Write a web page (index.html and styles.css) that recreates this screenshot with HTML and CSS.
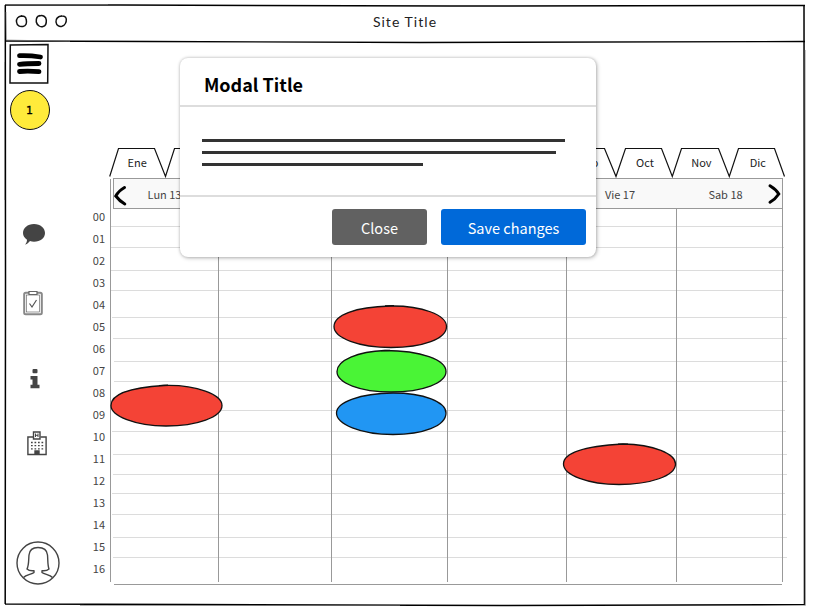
FILE: index.html
```html
<!DOCTYPE html>
<html lang="es">
<head>
<meta charset="utf-8">
<title>Site Title</title>
<link rel="stylesheet" href="styles.css">
</head>
<body>
<div class="window">
  <svg class="frame" viewBox="0 0 813 612" fill="none" stroke="#000">
    <path d="M5 5L120 5L450 6L805 5.500M804 5L804.200 200L804.500 605M5.300 5L5.500 280L5.200 604M5 604L190 604.500L500 605.500L805 604.500" stroke-width="1.500"/>
    <path d="M5 41L150 41.500L420 42.500L805 41.500" stroke-width="1.300"/>
    <path d="M5 4.500H108M4.500 62V200M805.200 50V606M80 605.500H400M6 12L6.500 40L70 41.500" stroke="#777" stroke-width=".6"/>
  </svg>
  <header class="titlebar">
    <svg class="controls" width="60" height="20" viewBox="0 0 60 20" fill="none" stroke="#111" stroke-width="1.500">
      <path d="M7 5C3 5 1 8 1.500 11C2 15 5 16 8 15.500C11 15 12 12 11.300 9C11 6 9 4.500 5.500 5"/>
      <path d="M25 4.500C22 5 21 8 21.300 11C22 14 25 16.500 28 15.500C31 15 31.500 12 31.300 9C31 5.500 28 3.800 24 5"/>
      <path d="M47 5C43 5 40.500 8 41 11C41.500 14.500 44 16 47 15.300C50 14.500 51.500 11 51.300 8C51 5 48 4.500 43.500 5.800"/>
    </svg>
    <h1 class="site-title">Site Title</h1>
  </header>
  <div class="workspace">
    <nav class="sidebar">
      <svg class="menu" width="40" height="41" viewBox="0 0 40 41">
        <path d="M1.300 2L39 1.500L38.700 40L1 40Z" fill="none" stroke="#111" stroke-width="1.500"/>
        <path d="M10.500 12.700Q20 12.200 31.500 14M10.500 21.300Q17 20.500 30 20.500M10.500 28.500Q19 27.500 30 28.700" fill="none" stroke="#000" stroke-width="4.800" stroke-linecap="round"/>
      </svg>
      <div class="badge">1</div>
      <svg class="icon chat" width="24" height="23" viewBox="0 0 24 23"><path d="M12 1C18.500 1 23 5 23 10C23 15 18.500 18.700 12 18.700C10.500 18.700 9.300 18.500 8 18C6.500 20 4.500 21.300 3 21.500C4.500 20 5 18.500 5 16.700C2.500 15 1 12.700 1 10C1 5 5.500 1 12 1Z" fill="#444"/></svg>
      <svg class="icon tasks" width="20" height="26" viewBox="0 0 20 26" fill="none" stroke="#555">
        <rect x="1.200" y="2.700" width="17.600" height="21.600" rx="1.500" stroke="#888" stroke-width="2"/>
        <rect x="3.500" y="5" width="13" height="17" stroke-width=".6"/>
        <path d="M6 4.500V1.500H14V4.500Z" fill="#fff" stroke="#666" stroke-width="1.200"/>
        <path d="M6.500 13.500L9 17L13.500 10" stroke-width="1.200"/>
      </svg>
      <svg class="icon info" width="10" height="20" viewBox="0 0 10 20" fill="#444"><rect x="2.500" y="0" width="5" height="4.300" rx="1"/><path d="M.5 7H7.500V15.800H9.500V19.300H.5V15.800H2.500V10.500H.5Z"/></svg>
      <svg class="icon hospital" width="20" height="25" viewBox="0 0 20 25" fill="none" stroke="#444" stroke-width="1.400">
        <path d="M6 6H.9V23.500H19.100V6H13.500"/>
        <path d="M6.500 1H13V8H6.500Z"/>
        <path d="M8.500 2.500V6M11 2.500V6M8.500 4.300H11" stroke-width="1"/>
        <path d="M4 11.500H17M4 14.700H17M4 17.900H17" stroke-dasharray="1.700 1.800" stroke-width="1.300"/>
        <path d="M8 23V20H12V23Z" fill="#444"/>
      </svg>
      <svg class="icon avatar" width="44" height="44" viewBox="0 0 44 44" fill="none" stroke="#444" stroke-width="1.400" stroke-linejoin="round">
        <circle cx="22" cy="22" r="21"/>
        <path d="M7.500 36.500C10 33.500 16 33.500 18 31.500V29.700C15 30 12.500 29.500 11 28C13 24 12.500 19 13 14C13.500 9 17 6.500 22 6.500C27.500 6.500 31 9 31.500 14C32 19 31.500 24 33 28C31.500 29.500 29 30 26 29.700V31.500C28.500 33.500 34 33.500 36.500 36.500"/>
      </svg>
    </nav>
    <main class="schedule">
      <svg class="tabs-outline" width="678" height="32" viewBox="0 0 678 32" fill="none" stroke="#111" stroke-width="1.200">
        <path d="M-.3 30.500L8.500 2.500H44.500L55.500 30.500L64.500 2.500H100.500L112 30.500L121 2.500H156.500L168.500 30.500L177.500 2.500H213.500L224.700 30.500L233.500 2.500H269.500L281 30.500L289.500 2.500H325.500L337.200 30.500L345.500 2.500H381.500L393.500 30.500L402.500 2.500H438.500L449.700 30.500L458.500 2.500H494.500L506 30.500L515.500 2.500H551.500L562.300 30.500L571.500 2.500H608.500L619.300 30.500L628.500 2.500H664.500L674.500 30.500"/>
      </svg>
      <div class="months"><span>Ene</span><span>Feb</span><span>Mar</span><span>Abr</span><span>May</span><span>Jun</span><span>Jul</span><span>Ago</span><span>Sep</span><span>Oct</span><span>Nov</span><span>Dic</span></div>
      <div class="days">
        <svg class="arrow" width="14" height="22" viewBox="0 0 14 22"><path d="M10.500 2.500Q4.500 6 1.800 11Q5.500 16 10.800 19" fill="none" stroke="#000" stroke-width="3" stroke-linecap="round"/></svg>
        <span>Lun 13</span><span>Mar 14</span><span>Mie 15</span><span>Jue 16</span><span>Vie 17</span><span>Sab 18</span>
        <svg class="arrow next" width="14" height="22" viewBox="0 0 14 22"><path d="M3 1.800Q9 5.500 11.800 10Q8.500 15 3 18.200" fill="none" stroke="#000" stroke-width="3" stroke-linecap="round"/></svg>
      </div>
      <div class="day-body">
        <div class="hours"><span>00</span><span>01</span><span>02</span><span>03</span><span>04</span><span>05</span><span>06</span><span>07</span><span>08</span><span>09</span><span>10</span><span>11</span><span>12</span><span>13</span><span>14</span><span>15</span><span>16</span></div>
        <svg class="grid" width="680" height="408" viewBox="110 178 680 408" fill="none">
          <path d="M110 226.500H783M110 247.500H784M111 270.500H784M111 290.500H784M112 317.500H787M113 338.500H787M114 361.500H787M114 381.500H787M112 410.500H785M112 431.500H786M113 454.500H787M113 474.500H787M112 493.500H785M112 514.500H786M113 537.500H787M113 557.500H787" stroke="#dcdcdc"/>
          <path d="M110.500 179V582M218.500 209V582M331.500 209V582M447.500 209V582M566.500 209V582M676.500 179V582M782.500 179V582M114 584.500H782" stroke="#999"/>
          <g stroke="#111" stroke-width="1.300">
            <path d="M111 405.500C111 393 132 387.500 164 385.500C197 384.500 222 395 222 405.500C222 417 197 426 166 426C135 426 111 416 111 405.500Z" fill="#f44336"/>
            <path d="M334 326.500C334 315 355 307 390 306C422 305.500 446.500 315 446.500 326.500C446.500 339 423 347.500 391 347.500C359 347.500 334 338 334 326.500Z" fill="#f44336"/>
            <path d="M337 371.500C337 360 358 351.500 385 350.500C421 350.500 446 360 446 371.500C446 383 423 392 391 392C360 392 337 383 337 371.500Z" fill="#4af436"/>
            <path d="M336.500 413C336.500 402 360 393.500 393 393C424 393 446 402 446 413C446 426 423 434.500 393 434.500C360 434.500 336.500 424 336.500 413Z" fill="#2196f3"/>
            <path d="M563.500 464C563.500 452 588 446 623 444C654 444.500 675.500 454 675.500 464C675.500 476 650 484.500 619 484.500C588 484.500 563.500 475 563.500 464Z" fill="#f44336"/>
            <path d="M159 385.500L168 385.100M385 305.900L394 305.700M381 350.600L390 350.400M618 444.100L628 444.100" stroke-width="1.200"/>
          </g>
        </svg>
      </div>
    </main>
  </div>
  <section class="modal" role="dialog">
    <h2 class="modal-title">Modal Title</h2>
    <div class="modal-body"><i class="line long"></i><i class="line medium"></i><i class="line short"></i></div>
    <footer class="modal-footer"><button class="btn close">Close</button><button class="btn save">Save changes</button></footer>
  </section>
</div>
</body>
</html>
```
FILE: styles.css
```css
* { box-sizing: border-box; }
body {
  margin: 0;
  background: #fff;
  font-family: "Noto Sans CJK SC", "Noto Sans", sans-serif;
  color: #333;
}
.window { position: relative; width: 813px; height: 612px; overflow: hidden; }
.frame { position: absolute; inset: 0; width: 813px; height: 612px; }
svg { display: block; flex: none; overflow: visible; }

.titlebar { display: flex; align-items: center; height: 43px; padding-left: 15px; }
.controls { margin-top: -2px; }
.site-title {
  width: 660px;
  margin: 0;
  text-align: center;
  font: 400 14px/20px Lato, sans-serif;
  letter-spacing: 1.05px;
  color: #222;
}

.workspace { display: flex; height: 565px; }
.sidebar { display: flex; flex-direction: column; width: 86px; padding-left: 9px; }
.badge {
  display: grid;
  place-items: center;
  width: 40px;
  height: 40px;
  margin: 6px 0 0 1px;
  border: 1px solid #111;
  border-radius: 50%;
  background: #ffeb3b;
  font: 500 11px "DejaVu Sans", sans-serif;
  color: #000;
  -webkit-text-stroke: .3px #000;
  padding-right: 1px;
}
.chat { margin: 93px 0 0 13px; }
.tasks { margin: 44px 0 0 14px; }
.info { margin: 53px 0 0 21px; }
.hospital { margin: 42px 0 0 18px; }
.avatar { margin: 85px 0 0 7px; }

.schedule { position: relative; width: 704px; padding-top: 103px; }
.tabs-outline { margin-left: 24px; }
.months {
  display: grid;
  grid-template-columns: repeat(12, 1fr);
  width: 677px;
  height: 28px;
  margin: -30px 0 2px 24px;
  font-size: 11px;
  line-height: 28px;
  text-align: center;
  color: #222;
}
.months span { padding-right: 2px; }
.days {
  position: relative;
  display: grid;
  grid-template-columns: 104px 113px 116px 119px 110px 106px;
  width: 670px;
  height: 31px;
  margin: 0 0 0 27px;
  border: 1px solid #999;
  background: #f9f9f9;
  font-size: 11px;
  line-height: 31px;
  text-align: center;
  color: #444;
}
.days span:nth-of-type(1) { padding-right: 3px; }
.days span:nth-of-type(6) { padding-right: 7px; }
.days span:nth-of-type(5) { padding-right: 2px; }
.arrow { position: absolute; left: 0; top: 6px; }
.arrow.next { left: auto; right: 1px; top: 5px; }
.day-body { display: flex; margin-top: -31px; }
.hours { display: flex; flex-direction: column; width: 24px; padding: 27px 5px 0 0; }
.hours span { height: 22px; font-size: 11px; line-height: 22px; text-align: right; color: #444; }

.modal {
  position: absolute;
  left: 179.5px;
  top: 58px;
  width: 416.5px;
  height: 199px;
  border-radius: 8px;
  background: #fff;
  box-shadow: 0 0 3px rgba(0, 0, 0, .2), 1px 1px 4px rgba(0, 0, 0, .25);
}
.modal-title {
  height: 49px;
  margin: 0;
  padding: 0 0 0 24.5px;
  border-bottom: 2px solid #ddd;
  font-size: 18px;
  font-weight: 700;
  line-height: 53px;
  color: #000;
}
.modal-body { display: flex; flex-direction: column; gap: 9px; height: 90px; padding: 32px 0 0 22px; border-bottom: 2px solid #ddd; }
.line { height: 3px; background: #333; }
.long { width: 363px; }
.medium { width: 354px; }
.short { width: 221px; }
.modal-footer { display: flex; justify-content: flex-end; gap: 14px; padding: 12px 10px 0 0; }
.btn { height: 36px; padding: 0; border: 0; border-radius: 3px; font: 400 14.5px/38px "Noto Sans CJK SC", sans-serif; color: #fff; }
.close { width: 95px; background: #616161; }
.save { width: 145px; background: #0069d9; }
```
